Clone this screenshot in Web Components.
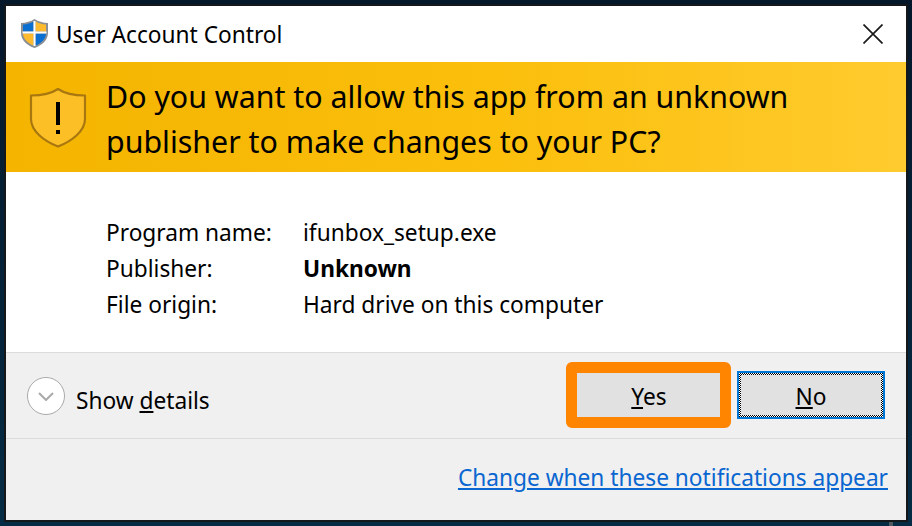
<!DOCTYPE html>
<html>
<head>
<meta charset="utf-8">
<title>User Account Control</title>
<style>
  html, body { margin: 0; padding: 0; height: 100%; }
  body { background: linear-gradient(#4e5a60, #4e5a60) 889px 522px / 4px 4px no-repeat, linear-gradient(#04172b, #052c44); overflow: hidden; font-family: "Noto Sans", "Open Sans", sans-serif; color: #000; }
</style>
</head>
<body>
<uac-dialog>
  <uac-titlebar slot="title">User Account Control</uac-titlebar>
  <uac-banner slot="banner">Do you want to allow this app from an unknown publisher to make changes to your PC?</uac-banner>
  <uac-info slot="info">
    <span>Program name:</span><span>ifunbox_setup.exe</span>
    <span>Publisher:</span><b>Unknown</b>
    <span>File origin:</span><span>Hard drive on this computer</span>
  </uac-info>
  <uac-footer slot="footer">
    <uac-details slot="details">Show <u>d</u>etails</uac-details>
    <uac-button slot="buttons" marked><u>Y</u>es</uac-button>
    <uac-button slot="buttons" focused><u>N</u>o</uac-button>
    <a slot="link" href="#" style="color:#0a66d0">Change when these notifications appear</a>
  </uac-footer>
</uac-dialog>

<script>
//small helper so every element gets an open shadow root from a template
function makeTemplate(html) {
  const t = document.createElement("template");
  t.innerHTML = html;
  return t;
}

const templateDialog = makeTemplate(`
  <style>
    :host { display: flex; flex-direction: column; box-sizing: border-box; width: 900px; height: 514px; margin: 6px; background: #fff; box-shadow: 0 0 0 2px #15181b; }
  </style>
  <slot name="title"></slot>
  <slot name="banner"></slot>
  <slot name="info"></slot>
  <slot name="footer"></slot>
`);

const templateTitlebar = makeTemplate(`
  <style>
    :host { display: flex; align-items: center; height: 56px; padding-left: 14px; font-size: 22.700px; color: #000; }
    svg.shield { width: 29px; height: 31px; margin-right: 7px; margin-top: -2px; flex: none; }
    .label { flex: 1; }
    svg.close { width: 20px; height: 20px; margin-right: 23px; margin-top: -1px; flex: none; }
  </style>
  <svg class="shield" viewBox="0 0 29 31">
    <path d="M14.5 1 C11 3.5 6 4.8 1 5 L1 15 C1 22 7 27.5 14.5 30 C22 27.5 28 22 28 15 L28 5 C23 4.8 18 3.5 14.5 1 Z" fill="#8a8f96"/>
    <path d="M13.5 3.4 C10.500 5.200 7 6.200 3 6.500 L3 13.500 L13.500 13.500 Z" fill="#0a6fd0"/>
    <path d="M15.500 3.400 C18.500 5.200 22 6.200 26 6.500 L26 13.500 L15.500 13.500 Z" fill="#fdbb2d"/>
    <path d="M3 15.500 L13.500 15.500 L13.500 27.500 C8 25.500 3.200 21 3 15.500 Z" fill="#fdbb2d"/>
    <path d="M26 15.500 L15.500 15.500 L15.500 27.500 C21 25.500 25.800 21 26 15.500 Z" fill="#0a6fd0"/>
    <path d="M13.500 3 H15.500 V28 H13.500 Z M2.500 13.500 H26.500 V15.500 H2.500 Z" fill="#fff"/>
  </svg>
  <span class="label"><slot></slot></span>
  <svg class="close" viewBox="0 0 20 20"><path d="M0.500 0.500 L19.500 19.500 M19.500 0.500 L0.500 19.500" stroke="#1a1a1a" stroke-width="1.700" fill="none"/></svg>
`);

const templateBanner = makeTemplate(`
  <style>
    :host { display: flex; align-items: center; box-sizing: border-box; height: 110px; padding-left: 23px; padding-right: 90px; background: linear-gradient(90deg, #f4b400 0%, #fbbf0c 55%, #ffcb2e 100%); font-size: 30.350px; line-height: 45px; color: #000; }
    svg { width: 58px; height: 61px; margin-right: 19px; margin-top: 1px; flex: none; }
    .text { flex: 1; margin-top: 3px; }
  </style>
  <svg viewBox="0 0 58 61">
    <path d="M29 2 C23 6 13 8.500 2 8.500 L2 32 C2 44 15 54 29 59.500 C43 54 56 44 56 32 L56 8.500 C45 8.500 35 6 29 2 Z" fill="#fdbf26" stroke="#a8770f" stroke-width="2.200" stroke-linejoin="round"/>
    <rect x="27" y="15" width="4" height="23" fill="#000"/>
    <rect x="27" y="43" width="4" height="4" fill="#000"/>
  </svg>
  <span class="text"><slot></slot></span>
`);

const templateInfo = makeTemplate(`
  <style>
    :host { display: block; box-sizing: border-box; height: 180px; padding: 42px 0 0 100px; font-size: 22.700px; }
    .grid { display: grid; grid-template-columns: 197px 1fr; grid-auto-rows: 36px; align-items: center; }
    ::slotted(b) { font-weight: 700; }
  </style>
  <div class="grid"><slot></slot></div>
`);

const templateFooter = makeTemplate(`
  <style>
    :host { display: flex; flex-direction: column; flex: 1; background: #f0f0f0; border-top: 1px solid #dcdcdc; font-size: 22.700px; }
    .top { display: flex; align-items: center; justify-content: space-between; box-sizing: border-box; height: 86px; padding: 0 21px 0 21px; border-bottom: 1px solid #dcdcdc; }
    .buttons { display: flex; gap: 15px; margin-top: -2px; }
    .bottom { flex: 1; display: flex; justify-content: flex-end; padding: 21px 18px 0 0; line-height: 36px; }
    ::slotted(a) { color: #0a66d0; }
  </style>
  <div class="top">
    <slot name="details"></slot>
    <div class="buttons"><slot name="buttons"></slot></div>
  </div>
  <div class="bottom"><slot name="link"></slot></div>
`);

const templateDetails = makeTemplate(`
  <style>
    :host { display: flex; align-items: center; gap: 11px; }
    .circle { box-sizing: border-box; width: 38px; height: 38px; border: 1px solid #aaa; border-radius: 50%; background: #fff; display: flex; align-items: center; justify-content: center; }
    svg { width: 16px; height: 9px; margin-top: 2px; }
    .label { margin-top: 9px; }
  </style>
  <span class="circle"><svg viewBox="0 0 16 9"><path d="M1 1 L8 8 L15 1" fill="none" stroke="#aaa" stroke-width="2"/></svg></span>
  <span class="label"><slot></slot></span>
`);

const templateButton = makeTemplate(`
  <style>
    :host { position: relative; display: flex; align-items: center; justify-content: center; box-sizing: border-box; width: 148px; height: 48px; padding-top: 4px; background: #e1e1e1; border: 2px solid #adadad; font-size: 22.700px; }
    :host([focused]) { border-color: #0078d7; }
    :host([focused]) .dots { display: block; }
    :host([marked]) { padding-left: 2px; }
    :host([marked]) .marker { display: block; }
    .label { position: relative; }
    .dots { display: none; position: absolute; inset: 0; background: repeating-conic-gradient(#000 0 25%, #fff 0 50%) 0 0 / 2px 2px; }
    .dots::after { content: ""; position: absolute; inset: 2px; background: #e1e1e1; }
    .marker { display: none; position: absolute; left: -10px; right: -11px; top: -11px; bottom: -11px; border: 11px solid #ff8400; border-radius: 6px; }
  </style>
  <span class="dots"></span>
  <span class="label"><slot></slot></span>
  <span class="marker"></span>
`);

class UacElement extends HTMLElement {
  constructor(template) {
    super();
    this.shadow = this.attachShadow({ mode: "open" });
    this.shadow.appendChild(template.content.cloneNode(true));
  }
}

class UacDialog extends UacElement { constructor() { super(templateDialog); } }
class UacTitlebar extends UacElement { constructor() { super(templateTitlebar); } }
class UacBanner extends UacElement { constructor() { super(templateBanner); } }
class UacInfo extends UacElement { constructor() { super(templateInfo); } }
class UacFooter extends UacElement { constructor() { super(templateFooter); } }
class UacDetails extends UacElement { constructor() { super(templateDetails); } }
class UacButton extends UacElement { constructor() { super(templateButton); } }

window.customElements.define("uac-dialog", UacDialog);
window.customElements.define("uac-titlebar", UacTitlebar);
window.customElements.define("uac-banner", UacBanner);
window.customElements.define("uac-info", UacInfo);
window.customElements.define("uac-footer", UacFooter);
window.customElements.define("uac-details", UacDetails);
window.customElements.define("uac-button", UacButton);
</script>
</body>
</html>
